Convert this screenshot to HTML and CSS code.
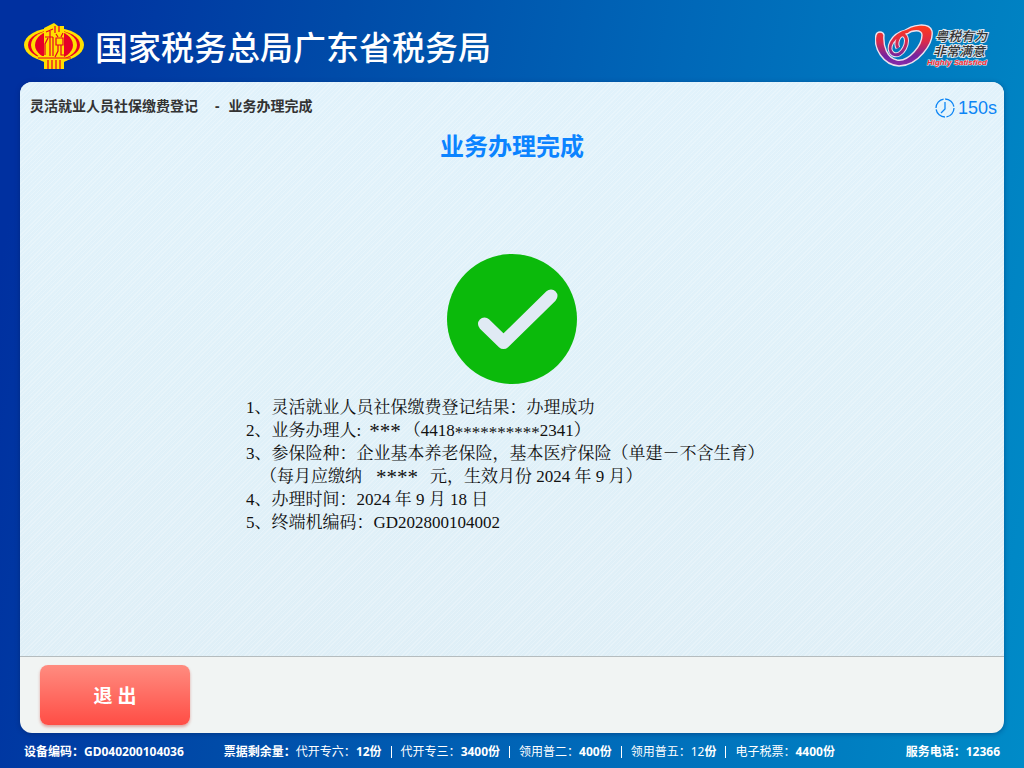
FILE: index.html
```html
<!DOCTYPE html>
<html lang="zh-CN">
<head>
<meta charset="utf-8">
<meta name="viewport" content="width=device-width, initial-scale=1">
<title>业务办理完成</title>
<link rel="stylesheet" href="styles.css">
</head>
<body class="page">
<header class="header">
  <svg class="emblem" viewBox="0 0 60 46" aria-hidden="true">
    <ellipse cx="30" cy="22" rx="30" ry="17" fill="#ffe000"/>
    <ellipse cx="30" cy="22" rx="26" ry="15" fill="#e60027"/>
    <ellipse cx="30" cy="22" rx="23" ry="15" fill="#ffe000"/>
    <ellipse cx="30" cy="22" rx="19" ry="14" fill="#e60027"/>
    <path d="M20 5l6-3 4-2 4 3h6v43H20v-9l-6-2v-2h6z" fill="#ffe000"/>
    <path d="M12 35h36l-8 4H20z" fill="#ffe000"/>
    <path d="M22 9l7-3M26 8v25M21 14h8M24 15l-3 6v11M29 14v19M31 3v7M35 3v6M32 11l2 3M39 10l-2 4M32 15h7v7h-7zM34 22v6l-3 6M37 22v10h4v-4M24 46V37M28 46V37M32 46V37M36 46V37M14 35h33" fill="none" stroke="#e60027" stroke-width="1.2"/>
  </svg>
  <h1 class="org">国家税务总局广东省税务局</h1>
  <div class="slogan">
    <svg class="ribbon" viewBox="0 0 59 46" aria-hidden="true">
      <defs>
        <linearGradient id="ribbon" gradientUnits="userSpaceOnUse" x1="0" y1="3" x2="0" y2="43">
          <stop offset="0" stop-color="#ff3a1c"/>
          <stop offset=".4" stop-color="#d92a4c"/>
          <stop offset=".75" stop-color="#7424a0"/>
          <stop offset="1" stop-color="#8a2caa"/>
        </linearGradient>
      </defs>
      <path d="M1 12C2 8 8 8 9 12C8 23 12 35 22 37C34 39 47 22 47 12C47 6 37 7 32 11L28 9C37 1 54 -1 57 8C59 20 43 43 24 43C8 42 -2 25 1 12Z" fill="url(#ribbon)" stroke="#ece2ee" stroke-width="1.4"/>
      <path d="M31 9C17 12 11 26 18 31C27 36 36 17 29 12C24 10 20 20 23 25" fill="none" stroke="#ece2ee" stroke-width="5"/>
      <path d="M33 8C17 12 11 26 18 31C27 36 36 17 29 12C24 10 20 20 23 25" fill="none" stroke="url(#ribbon)" stroke-width="3"/>
    </svg>
    <div class="slogan-text">
      <span>粤税有为</span>
      <span class="slogan-second">非常满意</span>
      <span class="slogan-en">Highly Satisfied</span>
    </div>
  </div>
</header>

<main class="panel">
  <section class="content">
    <div class="topline">
      <nav class="crumbs" aria-label="当前位置"><span>灵活就业人员社保缴费登记</span><span>-</span><span>业务办理完成</span></nav>
      <div class="timer">
        <svg class="clock" viewBox="0 0 20 20" aria-hidden="true"><circle cx="10" cy="10" r="9" fill="none" stroke="#0c85f5" stroke-width="1.3" stroke-dasharray="12.5 1.6"/><path d="M10 4v7l-4 4" fill="none" stroke="#0c85f5" stroke-width="1.3"/></svg>
        <span>150s</span>
      </div>
    </div>
    <h2 class="title">业务办理完成</h2>
    <svg class="success" viewBox="0 0 130 130" role="img" aria-label="成功">
      <circle cx="65" cy="65" r="65" fill="#0bba0b"/>
      <path d="M37.500 70L56.500 88.500L104 42" fill="none" stroke="#e0eaf4" stroke-width="13" stroke-linecap="round" stroke-linejoin="round"/>
    </svg>
    <div class="result">
      <p>1、灵活就业人员社保缴费登记结果：办理成功</p>
      <p>2、业务办理人:<span class="mask mask-wide person">***</span>（4418<span class="mask">**********</span>2341）</p>
      <p>3、参保险种：企业基本养老保险，基本医疗保险（单建－不含生育）</p>
      <p class="indent">（每月应缴纳<span class="mask mask-wide amount">****</span>元，生效月份 2024 年 9 月）</p>
      <p>4、办理时间：2024 年 9 月 18 日</p>
      <p>5、终端机编码：GD202800104002</p>
    </div>
  </section>
  <div class="actions"><button class="exit" type="button">退 出</button></div>
</main>

<footer class="footer">
  <strong>设备编码：GD040200104036</strong>
  <div class="stock">
    <strong>票据剩余量：</strong>
    <ul class="stock-list">
      <li>代开专六：<b>12份</b></li>
      <li>代开专三：<b>3400份</b></li>
      <li>领用普二：<b>400份</b></li>
      <li>领用普五：12<b>份</b></li>
      <li>电子税票：<b>4400份</b></li>
    </ul>
  </div>
  <strong class="phone">服务电话：12366</strong>
</footer>
</body>
</html>
```
FILE: styles.css
```css
* {
  box-sizing: border-box;
}

.page {
  display: flex;
  flex-direction: column;
  min-height: 100vh;
  margin: 0;
  background: linear-gradient(100deg, #0030a0 4%, #004ba8 30%, #0068b8 60%, #0085c4 92%, #008bc8);
  color: #333;
  font-family: "Noto Sans", "Noto Sans CJK SC", sans-serif;
}

.header {
  display: flex;
  align-items: center;
  height: 82px;
  padding: 10px 37px 0 24px;
}

.emblem {
  width: 60px;
  height: 46px;
}

.org {
  margin: 0 auto 0 11px;
  color: #fff;
  font-size: 33px;
  font-weight: 500;
  line-height: 48px;
  font-family: "Noto Sans CJK SC", sans-serif;
}

.slogan {
  display: flex;
  align-items: center;
}

.ribbon {
  width: 59px;
  height: 46px;
}

.slogan-text {
  display: flex;
  flex-direction: column;
  align-items: flex-end;
  margin-left: -7px;
  padding-top: 3px;
  color: #333;
  font: italic 500 13px/15px "Noto Sans CJK SC", sans-serif;
  -webkit-text-stroke: 2px #dde6ee;
  paint-order: stroke;
}

.slogan-second {
  padding-right: 2px;
}

.slogan-en {
  color: #f02b35;
  font: italic 700 8px/10px "Liberation Sans", sans-serif;
  -webkit-text-stroke-width: 1px;
}

.panel {
  display: flex;
  flex: 1;
  flex-direction: column;
  margin: 0 20px;
  overflow: hidden;
  border-radius: 12px;
  background: #f1f4f3;
  box-shadow: 0 1px 5px rgba(0, 30, 90, .45);
}

.content {
  display: flex;
  flex: 1;
  flex-direction: column;
  align-items: center;
  border-bottom: 1px solid #b5bcbe;
  background:
    repeating-linear-gradient(135deg, rgba(255, 255, 255, .22) 0 1px, rgba(255, 255, 255, 0) 1px 3px),
    linear-gradient(#e1f2fb, #e0f1f9 50%, #dfeff7);
}

.topline {
  display: flex;
  justify-content: space-between;
  align-items: flex-start;
  width: 100%;
  padding: 12px 7px 0 10px;
}

.crumbs {
  display: flex;
  gap: 9px;
  font-size: 14px;
  font-weight: 700;
  line-height: 24px;
}

.crumbs span:first-child {
  margin-right: 8px;
}

.timer {
  display: flex;
  align-items: center;
  gap: 3px;
  color: #0c85f5;
  font: 18px/28px "Liberation Sans", sans-serif;
}

.clock {
  width: 20px;
  height: 20px;
}

.title {
  margin: 6px 0 0;
  color: #0b83ff;
  font-size: 24px;
  line-height: 36px;
}

.success {
  width: 130px;
  height: 130px;
  margin-top: 90px;
}

.result {
  width: 532px;
  margin: 12px 0;
  color: #111;
  font: 17px/23px "Liberation Serif", "Noto Serif CJK SC", "Noto Sans CJK SC", serif;
}

.result p {
  margin: 0;
}

.result .indent {
  padding-left: 14px;
}

.mask {
  line-height: 0;
  vertical-align: -2px;
}

.person {
  margin: 0 3px 0 8px;
}

.mask-wide {
  font-size: 21px;
}

.amount {
  margin: 0 12px 0 14px;
}

.actions {
  padding: 8px 20px;
}

.exit {
  display: block;
  width: 150px;
  height: 60px;
  border: 0;
  border-radius: 8px;
  background: linear-gradient(#ff8c80, #ff4d45);
  box-shadow: 0 2px 3px rgba(190, 50, 40, .4);
  color: #fff;
  font: 700 19px "Noto Sans", "Noto Sans CJK SC", sans-serif;
}

.footer {
  display: flex;
  align-items: center;
  height: 35px;
  padding: 2px 24px 0;
  color: #fff;
  font-size: 12px;
  line-height: 18px;
  white-space: nowrap;
}

.stock {
  display: flex;
  margin-left: 40px;
}

.stock-list {
  display: flex;
  margin: 0;
  padding: 0;
  list-style: none;
}

.stock-list li {
  display: flex;
  align-items: center;
}

.stock-list li + li::before {
  width: 1px;
  height: 12px;
  margin: 0 9px;
  background: #fff;
  content: "";
}

.phone {
  margin-left: auto;
}
```
